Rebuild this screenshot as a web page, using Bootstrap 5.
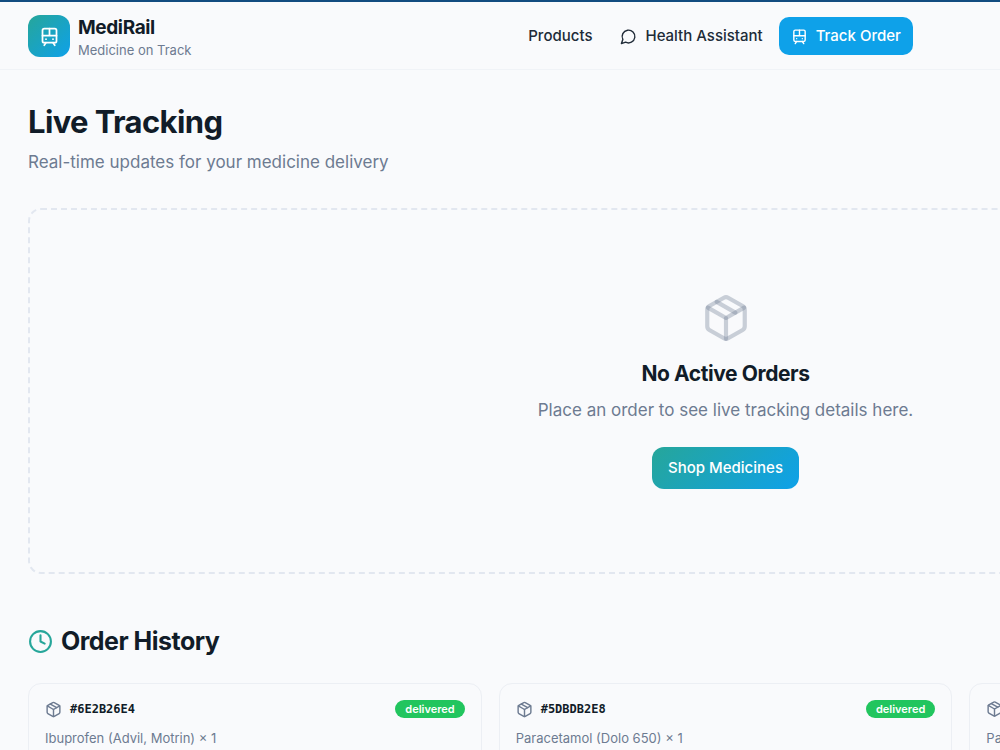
<!DOCTYPE html>
<html lang="en">
<head>
<meta charset="utf-8">
<meta name="viewport" content="width=device-width, initial-scale=1">
<title>MediRail - Live Tracking</title>
<link href="https://cdn.jsdelivr.net/npm/bootstrap@5.3.0/dist/css/bootstrap.min.css" rel="stylesheet">
<style>
  :root { --ink: #111c28; --muted: #6d7b91; --line: #eceff4; --teal: #26a69a; --sky: #0ea1e9; }
  body { background: #f9fafc; color: var(--ink); font-family: Inter, sans-serif; overflow: hidden; border-top: 2px solid #124c80; height: 100vh; }
  h1, h2, h3 { font-weight: 700; letter-spacing: -0.02em; margin: 0; }
  /* the canvas runs past the right edge of the window */
  .canvas { width: 145.1%; }
  .gutter { padding-left: 28px; padding-right: 28px; }
  .topbar { border-bottom: 1px solid #f0f3f7; padding-top: 12px; padding-bottom: 11px; }
  .tint { background: linear-gradient(135deg, var(--teal), var(--sky)); }
  .logo { width: 42px; height: 42px; border-radius: 12px; }
  .brand-name { font-size: 19px; line-height: 28px; font-weight: 700; letter-spacing: -0.02em; }
  .brand-tag { font-size: 13px; line-height: 16px; color: var(--muted); }
  .menu { width: 65%; }
  .menu .nav-link { color: #202b38; font-size: 15px; line-height: 22px; font-weight: 500; padding: 8px 12px; border-radius: 10px; gap: 8px; }
  .menu .nav-link.active { background: var(--sky); color: #fff; }
  .ico { fill: none; stroke: currentColor; stroke-width: 2; stroke-linecap: round; stroke-linejoin: round; flex: none; }
  h1 { font-size: 31px; line-height: 38px; }
  h2 { font-size: 25px; line-height: 34px; }
  h3 { font-size: 21px; line-height: 30px; }
  .page { padding-top: 33px; }
  .copy { font-size: 17px; line-height: 26px; color: var(--muted); }
  .vacant { border: 2px dashed #e2e7f0; border-radius: 13px; padding: 83px 28px; margin-top: 33px; }
  .vacant .ico { color: rgba(109, 123, 145, .35); }
  .shop { color: #fff; font-size: 15px; line-height: 22px; font-weight: 500; padding: 10px 16px; border: 0; border-radius: 12px; }
  .shop:hover { color: #fff; }
  .history { margin-top: 50px; margin-bottom: 25px; }
  .history .ico { color: var(--teal); }
  .orders { display: grid; grid-template-columns: repeat(3, 1fr); gap: 17px; }
  .order { border: 1px solid var(--line); border-radius: 13px; padding: 16px; background: #f9fafc; }
  .order .ico { color: var(--muted); }
  .order-id { font: 700 12px/18px "DejaVu Sans Mono", monospace; }
  .state { background: #22c55e; font-size: 11px; line-height: 12px; font-weight: 600; padding: 3px 10px; }
  .item { font-size: 13px; line-height: 20px; color: var(--muted); margin-top: 10px; }
</style>
</head>
<body>
<svg class="d-none" aria-hidden="true">
  <symbol id="train" viewBox="0 0 24 24"><rect x="4" y="3" width="16" height="16" rx="2"/><path d="M4 11h16M12 3v8M8 19l-2 3M18 22l-2-3M8 15h.01M16 15h.01"/></symbol>
  <symbol id="chat" viewBox="0 0 24 24"><path d="M7.9 20A9 9 0 1 0 4 16.1L2 22Z"/></symbol>
  <symbol id="box" viewBox="0 0 24 24"><path d="m7.5 4.27 9 5.15"/><path d="M21 8a2 2 0 0 0-1-1.73l-7-4a2 2 0 0 0-2 0l-7 4A2 2 0 0 0 3 8v8a2 2 0 0 0 1 1.73l7 4a2 2 0 0 0 2 0l7-4A2 2 0 0 0 21 16Z"/><path d="m3.3 7 8.7 5 8.7-5"/><path d="M12 22V12"/></symbol>
  <symbol id="clock" viewBox="0 0 24 24"><circle cx="12" cy="12" r="10"/><path d="M12 6v6l4 2"/></symbol>
</svg>
<div class="canvas">
  <header class="topbar gutter d-flex align-items-center justify-content-between">
    <a href="#" class="d-flex align-items-center gap-2 text-reset text-decoration-none">
      <span class="logo tint text-white d-flex align-items-center justify-content-center"><svg class="ico" width="21" height="21"><use href="#train"/></svg></span>
      <span class="d-flex flex-column"><span class="brand-name">MediRail</span><span class="brand-tag">Medicine on Track</span></span>
    </a>
    <nav class="nav menu flex-nowrap gap-1">
      <a class="nav-link" href="#">Products</a>
      <a class="nav-link d-flex align-items-center" href="#"><svg class="ico" width="17" height="17"><use href="#chat"/></svg>Health Assistant</a>
      <a class="nav-link active d-flex align-items-center" href="#" aria-current="page"><svg class="ico" width="17" height="17"><use href="#train"/></svg>Track Order</a>
    </nav>
  </header>
  <main class="page gutter">
    <h1>Live Tracking</h1>
    <p class="copy mt-2 mb-0">Real-time updates for your medicine delivery</p>
    <section class="vacant text-center">
      <svg class="ico d-block mx-auto" width="50" height="50"><use href="#box"/></svg>
      <h3 class="mt-3">No Active Orders</h3>
      <p class="copy mt-2 mb-4">Place an order to see live tracking details here.</p>
      <button type="button" class="btn shop tint">Shop Medicines</button>
    </section>
    <div class="history d-flex align-items-center gap-2">
      <svg class="ico" width="25" height="25"><use href="#clock"/></svg>
      <h2>Order History</h2>
    </div>
    <section class="orders">
      <article class="order">
        <div class="d-flex align-items-center gap-2">
          <svg class="ico" width="17" height="17"><use href="#box"/></svg><span class="order-id">#6E2B26E4</span><span class="badge rounded-pill state ms-auto">delivered</span>
        </div>
        <div class="item">Ibuprofen (Advil, Motrin) × 1</div>
      </article>
      <article class="order">
        <div class="d-flex align-items-center gap-2">
          <svg class="ico" width="17" height="17"><use href="#box"/></svg><span class="order-id">#5DBDB2E8</span><span class="badge rounded-pill state ms-auto">delivered</span>
        </div>
        <div class="item">Paracetamol (Dolo 650) × 1</div>
      </article>
      <article class="order">
        <div class="d-flex align-items-center gap-2">
          <svg class="ico" width="17" height="18"><use href="#box"/></svg>
        </div>
        <div class="item">Pa</div>
      </article>
    </section>
  </main>
</div>
<script src="https://cdn.jsdelivr.net/npm/bootstrap@5.3.0/dist/js/bootstrap.bundle.min.js"></script>
</body>
</html>
